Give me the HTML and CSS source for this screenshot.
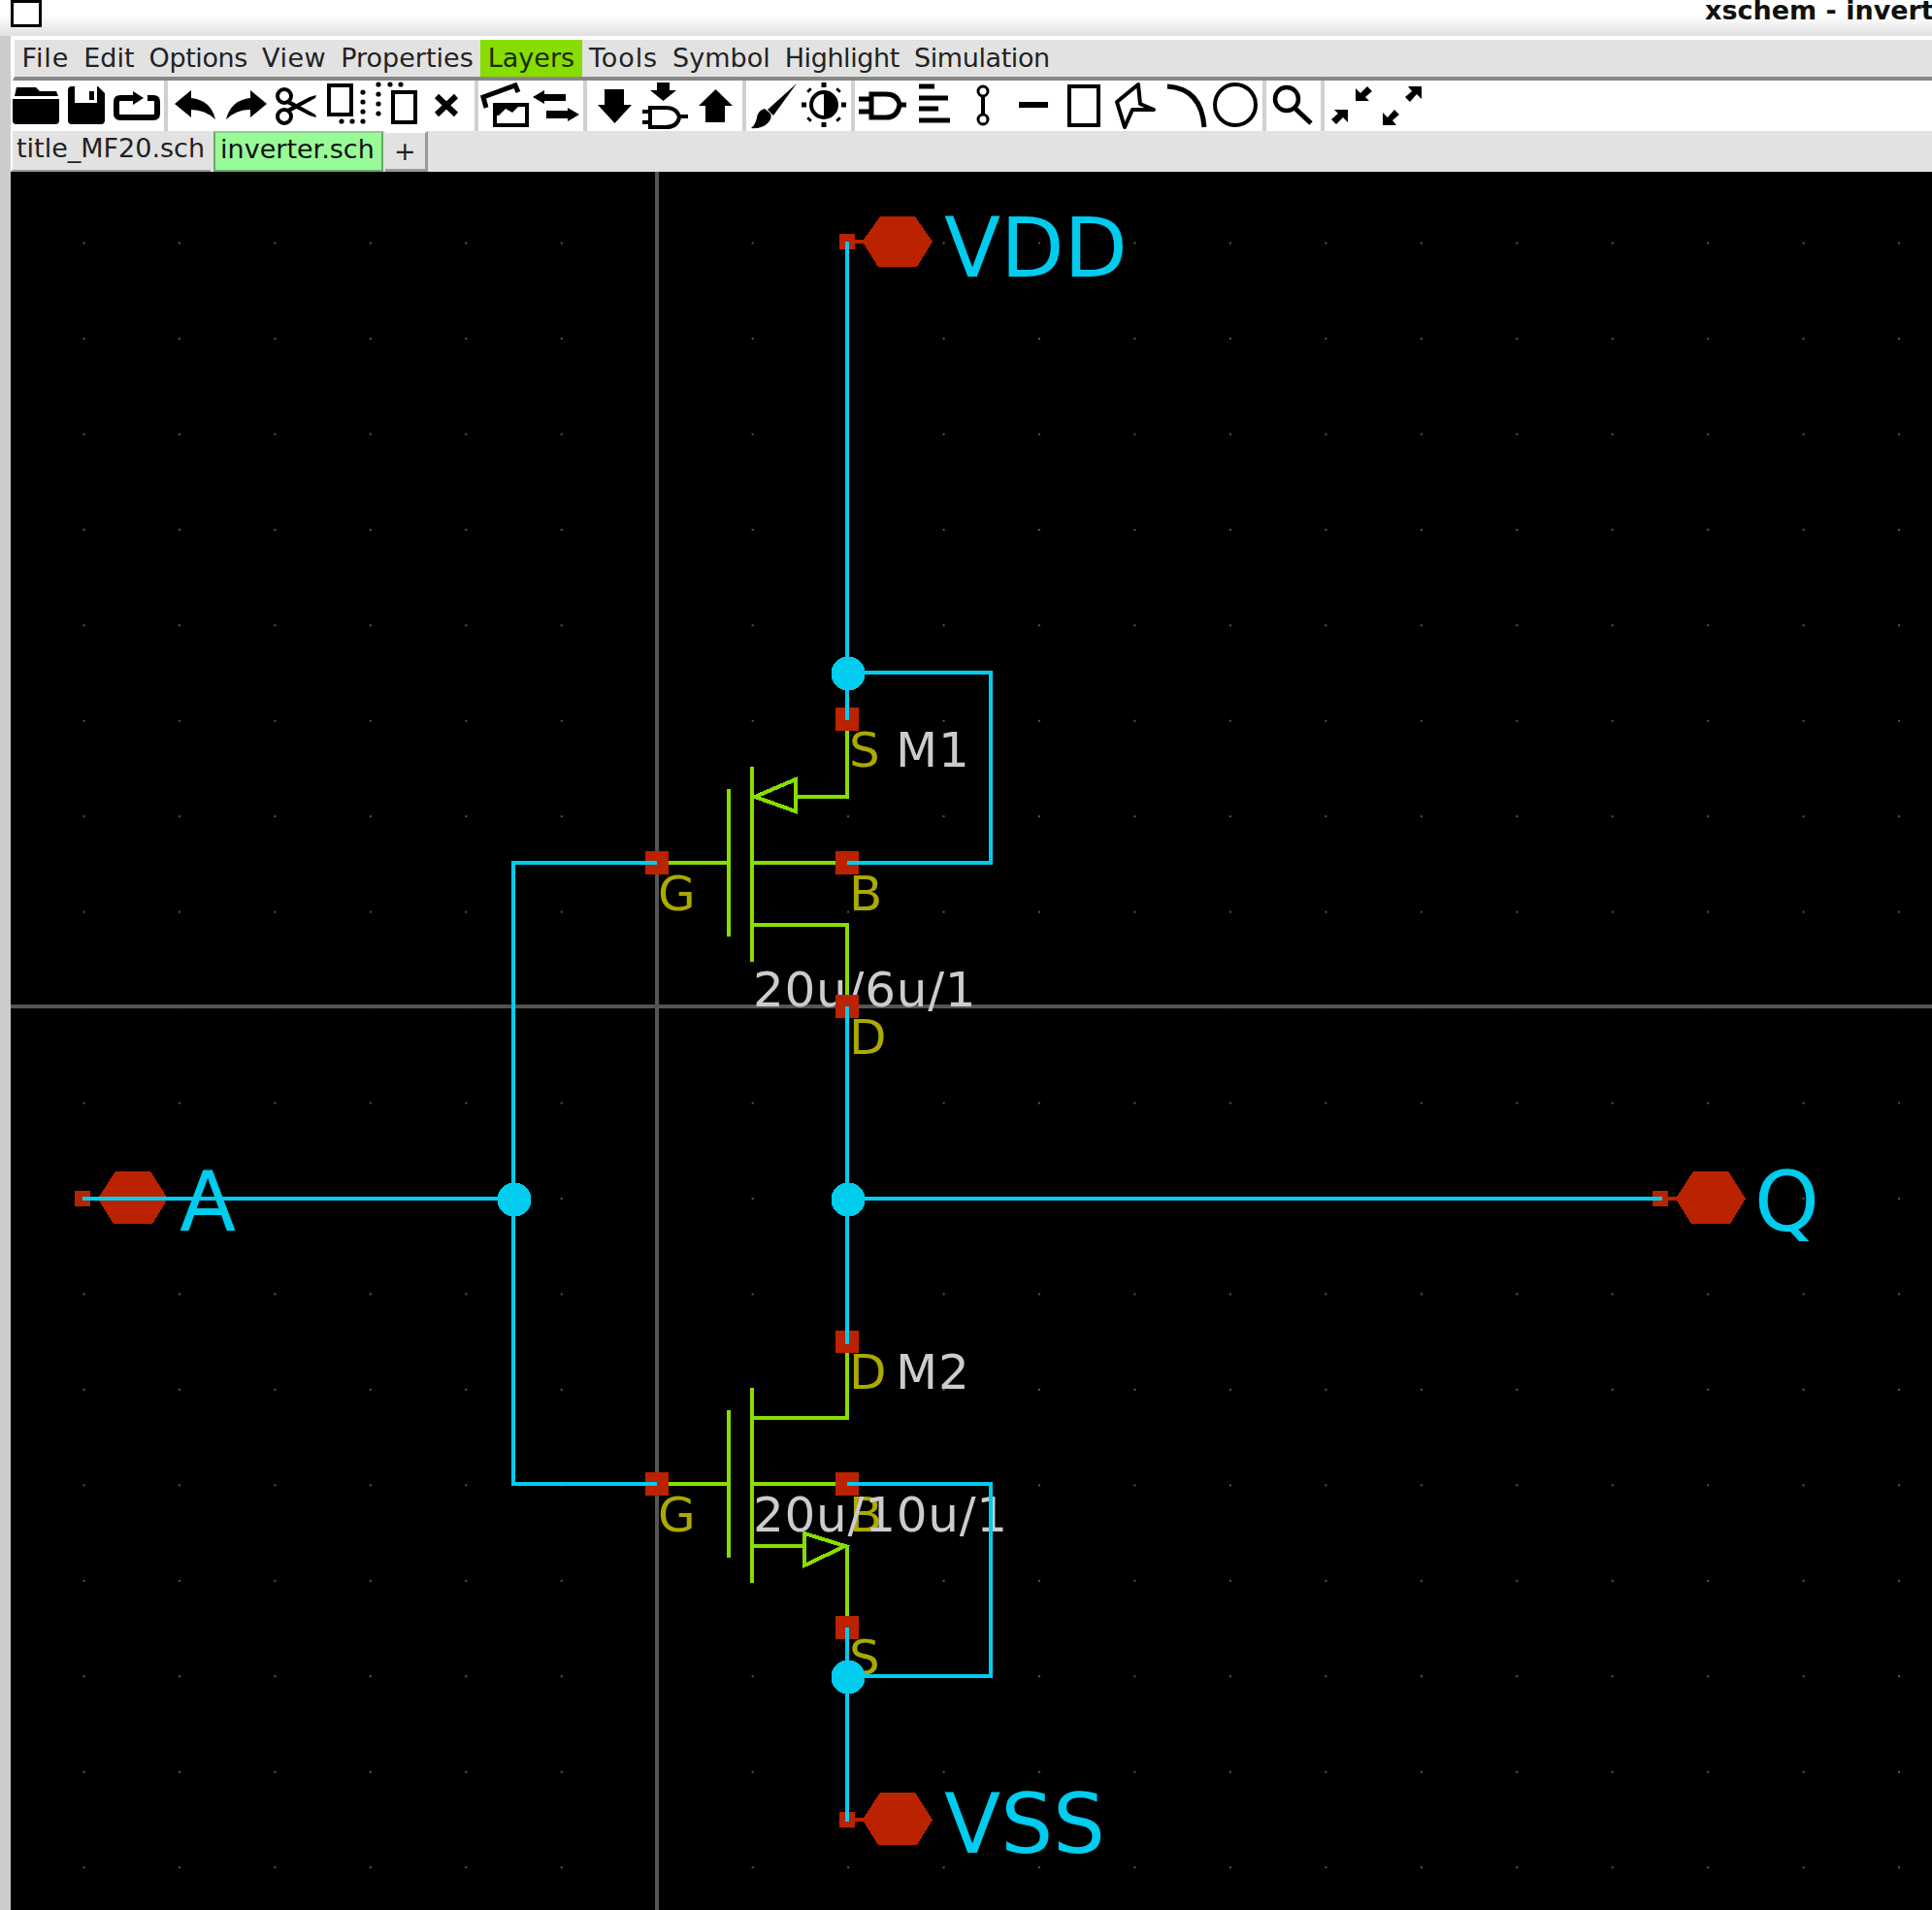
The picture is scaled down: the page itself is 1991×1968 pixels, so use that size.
FILE: index.html
```html
<!DOCTYPE html>
<html>
  <head>
    <meta charset="utf-8">
    <title>xschem - inverter.sch</title>
    <link rel="stylesheet" href="styles.css">
  </head>
  <body>
    <div class="titlebar">
      <div class="window-icon"></div>
      <div class="window-title">xschem - inverter.sch</div>
    </div>

    <div class="main">
      <div class="side"></div>
      <div class="app">
        <div class="menubar">
          <div class="menu-item spread">File</div>
          <div class="menu-item">Edit</div>
          <div class="menu-item tight">Options</div>
          <div class="menu-item loose">View</div>
          <div class="menu-item">Properties</div>
          <div class="menu-item active">Layers</div>
          <div class="menu-item spread">Tools</div>
          <div class="menu-item">Symbol</div>
          <div class="menu-item tight">Highlight</div>
          <div class="menu-item tight">Simulation</div>
        </div>

        <div class="toolbar">
          <!-- open, save, reload -->
          <svg class="tool" viewBox="0 0 52 52"><path d="M6 7H26L30 11H47L49 16H4Z"/><path d="M2 19H50V41Q50 45 46 45H6Q2 45 2 41Z"/></svg>
          <svg class="tool" viewBox="0 0 52 52"><path fill-rule="evenodd" d="M11 6H38L45 13V41Q45 45 41 45H11Q7 45 7 41V10Q7 6 11 6ZM14 6V23H37V6ZM29 11V20H34V11Z"/></svg>
          <svg class="tool" viewBox="0 0 52 52"><path class="line" stroke-width="6" d="M25 18H9Q5 18 5 22V34Q5 38 9 38H43Q47 38 47 34V22Q47 18 43 18H37"/><path d="M22 11L33 18L22 25Z"/></svg>
          <div class="sep"></div>

          <!-- undo, redo, cut, copy, move, delete -->
          <svg class="tool" viewBox="0 0 52 52"><path d="M5 24L22 10V18Q42 20 47 40Q36 30 22 30V38Z"/></svg>
          <svg class="tool" viewBox="0 0 52 52"><path d="M48 24L31 10V18Q11 20 6 40Q17 30 31 30V38Z"/></svg>
          <svg class="tool" viewBox="0 0 52 52"><circle class="line" stroke-width="4" cx="14" cy="16" r="7"/><circle class="line" stroke-width="4" cx="14" cy="37" r="7"/><path d="M19 20L46 35L47 38L40 36L17 24Z"/><path d="M19 33L46 18L47 15L40 17L17 29Z"/></svg>
          <svg class="tool" viewBox="0 0 52 52"><rect class="line" stroke-width="4" x="8" y="5" width="23" height="30"/><circle cx="43" cy="12" r="2.600"/><circle cx="43" cy="22" r="2.600"/><circle cx="43" cy="32" r="2.600"/><circle cx="21" cy="42" r="2.600"/><circle cx="32" cy="42" r="2.600"/><circle cx="43" cy="42" r="2.600"/></svg>
          <svg class="tool" viewBox="0 0 52 52"><rect class="line" stroke-width="4" x="22" y="12" width="23" height="31"/><circle cx="7" cy="4" r="2.600"/><circle cx="7" cy="14" r="2.600"/><circle cx="7" cy="24" r="2.600"/><circle cx="7" cy="34" r="2.600"/><circle cx="19" cy="4" r="2.600"/><circle cx="30" cy="4" r="2.600"/></svg>
          <svg class="tool" viewBox="0 0 52 52"><path class="line" stroke-width="6" d="M15 16L35 35M35 16L15 35"/></svg>
          <div class="sep"></div>

          <!-- load image, swap -->
          <svg class="tool" viewBox="0 0 52 52"><path class="line" stroke-width="5" d="M6 28L3 17L36 5L39 12"/><path class="line" stroke-width="4" d="M15 25H48V46H15Z"/><path d="M19 36L26 29L33 33L41 25H16V36Z"/></svg>
          <svg class="tool" viewBox="0 0 52 52"><path d="M2 17L14 10V14H36V21H14V24Z"/><path d="M50 35L38 28V31H16V39H38V42Z"/></svg>
          <div class="sep"></div>

          <!-- descend, descend symbol, go back -->
          <svg class="tool" viewBox="0 0 52 52"><path d="M16 9H36V25H44L26.500 44L9 25H16Z"/></svg>
          <svg class="tool" viewBox="0 0 52 52"><path d="M18 2H31V10H38L24.500 21L11 10H18Z"/><path class="line" stroke-width="4" d="M11 28H27Q39 28 41 38Q39 48 27 48H11ZM3 32H11M3 43H11M41 37H50"/></svg>
          <svg class="tool" viewBox="0 0 52 52"><path d="M16 43H36V26H44L26.500 9L9 26H16Z"/></svg>
          <div class="sep"></div>

          <!-- paint, contrast -->
          <svg class="tool" viewBox="0 0 52 52"><path d="M50 3L26 36L20 30Z"/><path d="M17 29Q10 31 9 38Q8 45 3 49Q15 50 21 43Q25 38 23 34Z"/></svg>
          <svg class="tool" viewBox="0 0 52 52"><circle class="line" stroke-width="4" cx="26" cy="25" r="13"/><path d="M26 12A13 13 0 0 1 26 38Z"/><path class="line" stroke-width="5" d="M26 2V7M26 43V48M3 25H8M44 25H49M10 9L12 11M42 9L40 11M10 41L12 39M42 41L40 39"/></svg>
          <div class="sep"></div>

          <!-- symbol, align, wire, line, rect, polygon, arc, circle -->
          <svg class="tool" viewBox="0 0 52 52"><path class="line" stroke-width="5" d="M15 14H30Q42 14 44 25Q42 38 30 38H15ZM2 19H15M2 32H15M44 25H51"/></svg>
          <svg class="tool" viewBox="0 0 52 52"><path class="line" stroke-width="5" d="M12 6H28M12 18H42M12 29H32M12 41H44"/></svg>
          <svg class="tool" viewBox="0 0 52 52"><circle class="line" stroke-width="3" cx="26" cy="11" r="5"/><circle class="line" stroke-width="3" cx="26" cy="40" r="5"/><path class="line" stroke-width="4" d="M26 16V35"/></svg>
          <svg class="tool" viewBox="0 0 52 52"><path class="line" stroke-width="6" d="M11 25H41"/></svg>
          <svg class="tool" viewBox="0 0 52 52"><rect class="line" stroke-width="4" x="11" y="6" width="30" height="40"/></svg>
          <svg class="tool" viewBox="0 0 52 52"><path class="line round" stroke-width="4" d="M8 22L30 4L32 24L46 30H24L16 48Z"/></svg>
          <svg class="tool" viewBox="0 0 52 52"><path class="line" stroke-width="5" d="M8 6Q43 8 46 48"/></svg>
          <svg class="tool" viewBox="0 0 52 52"><circle class="line" stroke-width="4" cx="26" cy="25" r="21"/></svg>
          <div class="sep"></div>

          <!-- zoom box -->
          <svg class="tool" viewBox="0 0 52 52"><circle class="line" stroke-width="4.500" cx="19" cy="19" r="12"/><path class="line" stroke-width="5" d="M28 29L44 44"/></svg>
          <div class="sep"></div>

          <!-- zoom out, zoom in -->
          <svg class="tool" viewBox="0 0 52 52"><path d="M30 21V8L35 13L42 6L47 11L40 17L44 21Z"/><path d="M22 30V43L17 38L10 45L5 40L12 34L8 30Z"/></svg>
          <svg class="tool" viewBox="0 0 52 52"><path d="M46 6V19L41 14L34 22L29 17L36 11L32 6Z"/><path d="M6 46V33L11 38L18 30L23 35L16 41L20 46Z"/></svg>
        </div>

        <div class="tabbar">
          <div class="tab">title_MF20.sch</div>
          <div class="tab current">inverter.sch</div>
          <div class="tab add">+</div>
        </div>

        <svg class="canvas" viewBox="11 177 1980 1791">
          <defs>
            <pattern id="gridDots" patternUnits="userSpaceOnUse" x="85.500" y="249.500" width="98.450" height="98.450">
              <rect class="grid-dot" width="2" height="2"/>
            </pattern>
          </defs>
          <rect x="11" y="177" width="1980" height="1791" fill="url(#gridDots)"/>

          <!-- origin cross -->
          <path class="cross" d="M677 177V1968M11 1037H1991"/>

          <text class="pin-name" x="875" y="790">S</text>
          <text class="pin-name" x="678" y="938">G</text>
          <text class="pin-name" x="875" y="938">B</text>
          <text class="pin-name" x="875" y="1086">D</text>
          <text class="pin-name" x="875" y="1431">D</text>
          <text class="pin-name" x="678" y="1578">G</text>
          <text class="pin-name" x="875" y="1578">B</text>
          <text class="pin-name" x="875" y="1725">S</text>

          <text class="inst-name" x="923" y="790">M1</text>
          <text class="inst-name" x="776" y="1037">20u/6u/1</text>
          <text class="inst-name" x="923" y="1431">M2</text>
          <text class="inst-name" x="776" y="1578">20u/10u/1</text>

          <text class="net-name" x="973" y="285">VDD</text>
          <text class="net-name" x="973" y="1909">VSS</text>
          <text class="net-name" x="185" y="1268">A</text>
          <text class="net-name" x="1808" y="1268">Q</text>

          <!-- M1 -->
          <path class="sym" d="M751 813V965M775 790V991M677 889H751M775 889H873M873 741V821H820M775 953H873V1037"/>
          <path class="sym" d="M778 821L820 803V836Z"/>
          <!-- M2 -->
          <path class="sym" d="M751 1453V1605M775 1430V1631M677 1529H751M775 1529H873M873 1382V1461H775M775 1593H829M873 1593V1677"/>
          <path class="sym" d="M829 1580V1613L871 1593Z"/>

          <!-- pins -->
          <rect class="pin" x="861" y="729" width="24" height="24"/>
          <rect class="pin" x="665" y="877" width="24" height="24"/>
          <rect class="pin" x="861" y="877" width="24" height="24"/>
          <rect class="pin" x="861" y="1025" width="24" height="24"/>
          <rect class="pin" x="861" y="1371" width="24" height="23"/>
          <rect class="pin" x="665" y="1517" width="24" height="24"/>
          <rect class="pin" x="861" y="1517" width="24" height="24"/>
          <rect class="pin" x="861" y="1665" width="24" height="24"/>

          <!-- io ports -->
          <path class="pin" d="M865 241H881V247H890L907 223H943L961 249L945 275H905L890 251H881V257H865Z"/>
          <path class="pin" d="M865 1867H881V1873H890L907 1847H943L961 1875L945 1901H905L890 1877H881V1883H865Z"/>
          <path class="pin" d="M77 1227H93V1233H102L119 1207H155L173 1235L157 1261H117L102 1237H93V1243H77Z"/>
          <path class="pin" d="M1703 1227H1719V1233H1728L1745 1207H1781L1799 1235L1783 1261H1743L1728 1237H1719V1243H1703Z"/>

          <!-- nets -->
          <path class="wire" d="M873 249V742M873 693H1021V889H873"/>
          <path class="wire" d="M873 1037V1385"/>
          <path class="wire" d="M873 1877V1677M873 1727H1021V1529H873"/>
          <path class="wire" d="M677 889H529V1529H677"/>
          <path class="wire" d="M85 1235H530"/>
          <path class="wire" d="M873 1235H1713"/>
          <circle class="dot" cx="874" cy="694" r="17.500"/>
          <circle class="dot" cx="874" cy="1728" r="17.500"/>
          <circle class="dot" cx="530" cy="1236" r="17.500"/>
          <circle class="dot" cx="874" cy="1236" r="17.500"/>
        </svg>
      </div>
    </div>
  </body>
</html>
```

FILE: styles.css
```css
html, body {
  height: 100%;
}
body {
  font-family: "DejaVu Sans", sans-serif;
  margin: 0;
  padding: 0;
  background-color: white;
  display: flex;
  flex-direction: column;
  overflow: hidden;
}
.titlebar {
  height: 37px;
  flex-shrink: 0;
  display: flex;
  align-items: flex-start;
  background: linear-gradient(#ffffff 43%, #e0e0e0 100%);
  overflow: hidden;
}
.window-icon {
  width: 26px;
  height: 22px;
  flex-shrink: 0;
  margin-left: 11px;
  background-color: white;
  border: 3px solid black;
}
.window-title {
  flex-shrink: 0;
  margin-left: 1714px;
  font-size: 27px;
  font-weight: 700;
  line-height: 22px;
  color: #111;
  white-space: nowrap;
}
.main {
  flex: 1;
  min-height: 0;
  display: flex;
}
.side {
  width: 11px;
  flex-shrink: 0;
  background-color: #cccccc;
}
.app {
  flex: 1;
  min-width: 0;
  display: flex;
  flex-direction: column;
  background-color: white;
}
.menubar {
  height: 38px;
  margin: 4px 0 0 2px;
  display: flex;
  background-color: #e2e2e2;
  border-left: 2px solid white;
  border-bottom: 4px solid #888888;
}
.menu-item {
  padding: 0 7.500px;
  font-size: 27px;
  line-height: 38px;
  color: #222;
}
.menu-item.spread {
  letter-spacing: 0.900px;
}
.menu-item.loose {
  letter-spacing: 0.550px;
}
.menu-item.tight {
  letter-spacing: -0.400px;
}
.menu-item.active {
  background-color: #88dd00;
  color: #1a2a00;
}
.toolbar {
  height: 52px;
  flex-shrink: 0;
  display: flex;
}
.tool {
  width: 52px;
  height: 52px;
  flex-shrink: 0;
  fill: black;
}
.line {
  fill: none;
  stroke: black;
}
.line.round {
  stroke-linejoin: round;
}
.sep {
  width: 4px;
  margin: 0 2px;
  flex-shrink: 0;
  background-color: #d0d0d0;
}
.tabbar {
  height: 42px;
  flex-shrink: 0;
  display: flex;
  background-color: #e2e2e2;
}
.tab {
  height: 40px;
  padding: 0 6px 0 4px;
  font-size: 27px;
  line-height: 36px;
  color: #222;
  background-color: #e2e2e2;
  border-left: 2px solid white;
  border-bottom: 2px solid #999999;
}
.tab.current {
  margin-left: 3px;
  padding: 0 7px 0 5px;
  background-color: #98fb98;
  border: 2px solid #6aa86a;
  border-top-color: #88d088;
  height: 38px;
  line-height: 34px;
  color: #111;
}
.tab.add {
  width: 41px;
  height: 37px;
  margin-left: 2px;
  padding: 0;
  text-align: center;
  line-height: 38px;
  border-top: 2px solid white;
  border-left: 0;
  border-right: 3px solid #999999;
  border-bottom: 3px solid #999999;
}
.canvas {
  display: block;
  flex: 1;
  min-height: 0;
  width: 1980px;
  background-color: black;
}
.grid-dot {
  fill: #555555;
}
.cross {
  fill: none;
  stroke: #555555;
  stroke-width: 4;
  shape-rendering: crispEdges;
}
.sym {
  fill: none;
  stroke: #88dd00;
  stroke-width: 4;
  shape-rendering: crispEdges;
}
.pin {
  fill: #bb2200;
  shape-rendering: crispEdges;
}
.wire {
  fill: none;
  stroke: #00ccee;
  stroke-width: 4;
  shape-rendering: crispEdges;
}
.dot {
  fill: #00ccee;
  shape-rendering: crispEdges;
}
.pin-name {
  font-size: 50px;
  fill: #aaaa00;
}
.inst-name {
  font-size: 50px;
  letter-spacing: 0.750px;
  fill: #cccccc;
}
.net-name {
  font-size: 85px;
  fill: #00ccee;
}
```
